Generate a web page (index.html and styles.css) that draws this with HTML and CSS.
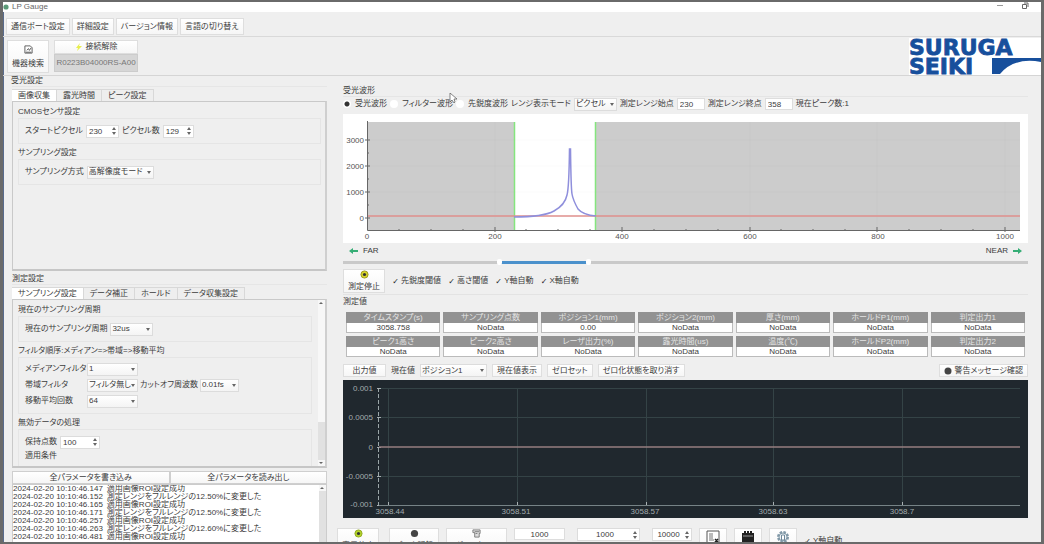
FILE: index.html
```html
<!DOCTYPE html>
<html lang="ja">
<head>
<meta charset="utf-8">
<title>LP Gauge</title>
<link rel="stylesheet" href="styles.css">
</head>
<body>
<div class="window">
  <header class="titlebar">
    <svg class="app-icon" viewBox="0 0 6 6"><circle cx="3" cy="3" r="2.6" fill="#5c9a78"/></svg>
    <span class="app-name">LP Gauge</span>
    <svg class="win-controls" viewBox="0 0 40 10"><path d="M6 3.5h6" stroke="#999"/><path d="M31.5 2.5h4v4h-4zM33 1h4v4" fill="none" stroke="#666"/></svg>
  </header>
  <nav class="menubar">
    <button>通信ポート設定</button><button>詳細設定</button><button>バージョン情報</button><button>言語の切り替え</button>
  </nav>
  <div class="toolbar">
    <button class="tool-button search"><svg class="icon" viewBox="0 0 10 10"><path d="M1 1h6l2 2v6H1z" fill="#fff" stroke="#555"/><path d="M3 6l2-2 1 2 2-3M2 8h6" fill="none" stroke="#555"/></svg>機器検索</button>
    <div class="connection">
      <button><svg class="bolt" viewBox="0 0 8 8"><path d="M5 0L1 5h2L2 8l5-5H4z" fill="#e8ee4c"/></svg>接続解除</button>
      <output>R0223B04000RS-A00</output>
    </div>
    <svg class="logo" viewBox="0 0 132 37" role="img" aria-label="SURUGA SEIKI">
      <rect width="132" height="37" fill="#fff"/>
      <g fill="#174f9c" stroke="#174f9c" stroke-width=".8"><text x="0" y="17">SURUGA</text><text x="0" y="36">SEIKI</text></g>
      <path d="M83 20h49v4Q105 19 91 36H83z" fill="#174f9c"/>
    </svg>
  </div>
  <main class="main">
    <section class="left">
      <h2>受光設定</h2>
      <div class="tabset">
        <div class="tabs"><button class="active">画像収集</button><button>露光時間</button><button>ピーク設定</button></div>
        <div class="pane upper">
          <h3>CMOSセンサ設定</h3>
          <div class="group">
            <div class="row">
              <label for="start">スタートピクセル</label><span class="spin"><input id="start" value="230"><svg viewBox="0 0 6 10"><path d="M1 4l2-3 2 3zM1 6l2 3 2-3z"/></svg></span>
              <label for="count">ピクセル数</label><span class="spin narrow"><input id="count" value="129"><svg viewBox="0 0 6 10"><path d="M1 4l2-3 2 3zM1 6l2 3 2-3z"/></svg></span>
            </div>
          </div>
          <h3>サンプリング設定</h3>
          <div class="group">
            <div class="row"><label for="method">サンプリング方式</label><span class="drop wide"><select id="method"><option>高解像度モード</option></select></span></div>
          </div>
        </div>
      </div>
      <h2 class="second">測定設定</h2>
      <div class="tabset">
        <div class="tabs"><button class="active">サンプリング設定</button><button>データ補正</button><button>ホールド</button><button>データ収集設定</button></div>
        <div class="pane lower">
          <div class="scroll-content">
            <h3>現在のサンプリング周期</h3>
            <div class="group"><div class="row"><label for="cycle">現在のサンプリング周期</label><span class="drop"><select id="cycle"><option>32us</option></select></span></div></div>
            <h3>フィルタ順序:メディアン=&gt;帯域=&gt;移動平均</h3>
            <div class="group filters">
              <div class="row"><label for="median">メディアンフィルタ</label><span class="drop mid"><select id="median"><option>1</option></select></span></div>
              <div class="row"><label for="band">帯域フィルタ</label><span class="drop mid"><select id="band"><option>フィルタ無し</option></select></span><label class="cut" for="cutoff">カットオフ周波数</label><span class="drop small"><select id="cutoff"><option>0.01fs</option></select></span></div>
              <div class="row"><label for="avg">移動平均回数</label><span class="drop mid"><select id="avg"><option>64</option></select></span></div>
            </div>
            <h3>無効データの処理</h3>
            <div class="group open">
              <div class="row"><label for="hold">保持点数</label><span class="spin large"><input id="hold" value="100"><svg viewBox="0 0 6 10"><path d="M1 4l2-3 2 3zM1 6l2 3 2-3z"/></svg></span></div>
              <div class="row">適用条件</div>
            </div>
          </div>
          <div class="scrollbar"><svg viewBox="0 0 6 6"><path d="M1 4l2-2 2 2z"/></svg><i class="thumb"></i><i class="trough"></i><svg viewBox="0 0 6 6"><path d="M1 2l2 2 2-2z"/></svg></div>
        </div>
      </div>
      <div class="param-buttons"><button>全パラメータを書き込み</button><button>全パラメータを読み出し</button></div>
      <div class="log">
        <ol>
          <li><time>2024-02-20 10:10:46.147</time>適用画像ROI設定成功</li>
          <li><time>2024-02-20 10:10:46.152</time>測定レンジをフルレンジの12.50%に変更した</li>
          <li><time>2024-02-20 10:10:46.165</time>適用画像ROI設定成功</li>
          <li><time>2024-02-20 10:10:46.171</time>測定レンジをフルレンジの12.50%に変更した</li>
          <li><time>2024-02-20 10:10:46.257</time>適用画像ROI設定成功</li>
          <li><time>2024-02-20 10:10:46.263</time>測定レンジをフルレンジの12.60%に変更した</li>
          <li><time>2024-02-20 10:10:46.481</time>適用画像ROI設定成功</li>
        </ol>
        <div class="scrollbar"><svg viewBox="0 0 6 6"><path d="M1 4l2-2 2 2z"/></svg><i class="trough"></i></div>
      </div>
    </section>
    <section class="right">
      <h2>受光波形</h2>
      <div class="wave-options">
        <label class="radio"><input type="radio" name="wave" checked>受光波形</label>
        <label class="radio"><input type="radio" name="wave">フィルター波形<svg class="cursor" viewBox="0 0 8 11"><path d="M1 0v9l2-2 2 3 1-1-1-3h3z" fill="#fff" stroke="#555" stroke-width=".7"/></svg></label>
        <label class="radio"><input type="radio" name="wave">先鋭度波形</label>
        <label for="mode">レンジ表示モード</label><span class="drop"><select id="mode"><option>ピクセル</option></select></span>
        <label for="from">測定レンジ始点</label><input class="field" id="from" value="230">
        <label for="to">測定レンジ終点</label><input class="field" id="to" value="358">
        <span>現在ピーク数:1</span>
      </div>
      <svg class="chart" viewBox="0 0 685 129">
        <rect width="685" height="129" fill="#fff"/>
        <rect x="24" y="8" width="147" height="108" fill="#ccc"/><rect x="253" y="8" width="424" height="108" fill="#ccc"/>
        <path d="M152 8v108M407 8v108M534 8v108M662 8v108M24 26h653M24 52h653M24 78h653" stroke="#000" stroke-opacity=".02"/>
        <path d="M171.5 8v108M252.5 8v108" stroke="#85e57e" stroke-width="1.5"/>
        <path d="M24 102h653" stroke="#df8f8c" stroke-opacity=".75" stroke-width="2"/>
        <path d="M171 103Q200 103 211 97T224 81Q226 74 226.500 35h1Q228 74 229 80T235 95Q240 101 253 102" fill="none" stroke="#8f8fdc" stroke-width="1.500"/>
        <path d="M24.500 7v109.500H677M22 26h5M22 52h5M22 78h5M22 104h5M152 113v5M279 113v5M407 113v5M534 113v5M662 113v5M56 115v2M88 115v2M120 115v2M183 115v2M215 115v2M247 115v2M311 115v2M343 115v2M375 115v2M438 115v2M470 115v2M502 115v2M566 115v2M598 115v2M630 115v2M24 39h2M24 65h2M24 91h2" fill="none" stroke="#666"/>
        <g class="axis end"><text x="21" y="29">3000</text><text x="21" y="55">2000</text><text x="21" y="81">1000</text><text x="21" y="107">0</text></g>
        <g class="axis"><text x="24" y="125">0</text><text x="152" y="125">200</text><text x="279" y="125">400</text><text x="407" y="125">600</text><text x="535" y="125">800</text><text x="662" y="125">1000</text></g>
      </svg>
      <div class="directions">
        <span><svg viewBox="0 0 9 6"><path d="M0 3l4-3v2h5v2H4v2z"/></svg>FAR</span>
        <span>NEAR<svg viewBox="0 0 9 6"><path d="M9 3L5 0v2H0v2h5v2z"/></svg></span>
      </div>
      <div class="range"><input type="range" aria-label="始点" max="1000" value="226"><input type="range" aria-label="終点" max="1000" value="357"></div>
      <div class="measure-row">
        <button class="tool-button"><svg class="icon" viewBox="0 0 10 10"><circle cx="5" cy="5" r="4" fill="#d8d52b" stroke="#99951e"/><circle cx="5" cy="5" r="1.800" fill="#333"/></svg>測定停止</button>
        <label class="check"><input type="checkbox" checked>先鋭度閾値</label>
        <label class="check"><input type="checkbox" checked>高さ閾値</label>
        <label class="check"><input type="checkbox" checked>Y軸自動</label>
        <label class="check"><input type="checkbox" checked>X軸自動</label>
      </div>
      <h2 class="values-title">測定値</h2>
      <table class="values">
        <tbody>
          <tr><th>タイムスタンプ(s)</th><th>サンプリング点数</th><th>ポジション1(mm)</th><th>ポジション2(mm)</th><th>厚さ(mm)</th><th>ホールドP1(mm)</th><th>判定出力1</th></tr>
          <tr><td>3058.758</td><td>NoData</td><td>0.00</td><td>NoData</td><td>NoData</td><td>NoData</td><td>NoData</td></tr>
        </tbody>
        <tbody>
          <tr><th>ピーク1高さ</th><th>ピーク2高さ</th><th>レーザ出力(%)</th><th>露光時間(us)</th><th>温度(℃)</th><th>ホールドP2(mm)</th><th>判定出力2</th></tr>
          <tr><td>NoData</td><td>NoData</td><td>NoData</td><td>NoData</td><td>NoData</td><td>NoData</td><td>NoData</td></tr>
        </tbody>
      </table>
      <div class="output-row">
        <button class="output">出力値</button>
        <label for="current">現在値</label><span class="drop wide"><select id="current"><option>ポジション1</option></select></span>
        <button>現在値表示</button><button>ゼロセット</button><button>ゼロ化状態を取り消す</button>
        <button class="warning"><svg viewBox="0 0 8 8"><circle cx="4" cy="4" r="3.500" fill="#444"/></svg>警告メッセージ確認</button>
      </div>
      <svg class="chart dark" viewBox="0 0 685 138">
        <rect width="685" height="138" fill="#20282e"/>
        <path d="M45.500 8v117M174.500 8v117M303.500 8v117M430.500 8v117M559.500 8v117M36 8.500h641M36 37.500h641M36 96.500h641" stroke="#344346"/>
        <path d="M35.500 8v117" stroke="#9ba6a8" stroke-dasharray="4 2"/>
        <path d="M34 8.500h4M34 37.500h4M34 67.500h4M34 96.500h4M34 125.500h4M45.500 122v4M174.500 122v4M303.500 122v4M430.500 122v4M559.500 122v4" stroke="#a8b0b2"/>
        <path d="M36 125.500h641" stroke="#768386"/>
        <path d="M36 67h641" stroke="#967e80" stroke-width="1.500"/>
        <g class="axis end"><text x="30" y="11">0.001</text><text x="30" y="40">0.0005</text><text x="30" y="70">0</text><text x="30" y="99">-0.0005</text><text x="30" y="127">-0.001</text></g>
        <g class="axis"><text x="47" y="134">3058.44</text><text x="173" y="134">3058.51</text><text x="302" y="134">3058.57</text><text x="430" y="134">3058.63</text><text x="559" y="134">3058.7</text></g>
      </svg>
      <div class="bottom-row">
        <button class="tool-button"><svg class="icon" viewBox="0 0 10 10"><circle cx="5" cy="5" r="4" fill="#b5d52b" stroke="#8ca51e"/><circle cx="5" cy="5" r="1.800" fill="#333"/></svg>表示停止</button>
        <button class="tool-button record"><svg class="icon" viewBox="0 0 10 10"><circle cx="5" cy="5" r="4" fill="#444"/></svg>データ記録</button>
        <button class="tool-button clear"><svg class="icon" viewBox="0 0 10 10"><path d="M1 1h8v4H8v4H3V4H1zM3 3h5M4 5h2" fill="#ddd" stroke="#777"/></svg>グラフクリア</button>
        <input class="field points" aria-label="表示点数" value="1000">
        <span class="spin points"><input aria-label="記録点数" value="1000"><svg viewBox="0 0 6 10"><path d="M1 4l2-3 2 3zM1 6l2 3 2-3z"/></svg></span>
        <span class="spin max"><input aria-label="最大点数" value="10000"><svg viewBox="0 0 6 10"><path d="M1 4l2-3 2 3zM1 6l2 3 2-3z"/></svg></span>
        <button class="icon-button" aria-label="グラフ"><svg viewBox="0 0 14 14"><path d="M1 1h12v12H1z" fill="#fff" stroke="#555"/><path d="M3 4h4M3 6h4M3 8h4M3 10h5" stroke="#777"/><path d="M9 9l3 3M12 9l-3 3" stroke="#222" stroke-width="1.500"/></svg></button>
        <button class="icon-button" aria-label="保存"><svg viewBox="0 0 14 14"><path d="M1 3h2V1h2v2h1V1h2v2h1V1h2v2h2v10H1z" fill="#222"/><path d="M2 6h10" stroke="#999"/></svg></button>
        <button class="icon-button" aria-label="設定"><svg viewBox="0 0 14 14"><circle cx="7" cy="7" r="5" fill="#eef3f6" stroke="#8299a8" stroke-width="2" stroke-dasharray="2.500 1.400"/><circle cx="7" cy="7" r="4" fill="none" stroke="#8299a8"/><path d="M5.500 5h3v5h-3z" fill="#fff" stroke="#6d8799"/></svg></button>
        <label class="check"><input type="checkbox" checked>Y軸自動</label>
      </div>
    </section>
  </main>
</div>
</body>
</html>
```
FILE: styles.css
```css
* { box-sizing: border-box; }
body { margin: 0; font: 8px/10px "Liberation Sans", "Noto Sans CJK JP", sans-serif; font-feature-settings: "palt"; color: #3c3c3c; background: #6a6a6a; }
button, input, select { font: inherit; font-feature-settings: inherit; color: inherit; margin: 0; }
h2, h3 { margin: 0; font-size: 8px; line-height: 10px; font-weight: 400; }
button { display: inline-flex; align-items: center; justify-content: center; padding: 0 4px; border: 1px solid #dedede; background: linear-gradient(#fff, #f6f6f6); white-space: nowrap; }
label { white-space: nowrap; }
.window { height: 100vh; overflow: hidden; display: flex; flex-direction: column; border: solid #6a6a6a; border-width: 2px 3px; background: #efefef; box-shadow: inset 1px 0 #596b8c; }

.titlebar { display: flex; align-items: center; flex: none; height: 10px; background: #fff; }
.app-icon { width: 6px; height: 6px; }
.app-name { margin-left: 3px; color: #666; }
.win-controls { width: 40px; height: 10px; margin-left: auto; margin-right: 10px; }
.menubar { display: flex; flex: none; gap: 2px; padding: 6px 3px 1px; border-bottom: 1px solid #d9d9d9; }
.menubar button { height: 17px; }
.toolbar { display: flex; flex: none; align-items: flex-start; gap: 5px; height: 39px; padding: 3px 0 0 4px; border-bottom: 1px solid #d5d5d5; }
.tool-button { flex-direction: column; gap: 3px; height: 24px; min-width: 42px; padding: 1px 3px; }
.tool-button.search { height: 33px; gap: 5px; }
.icon { width: 9px; height: 9px; flex: none; }
.connection { display: grid; width: 84px; grid-template-rows: 14px 18px; }
.bolt { width: 8px; height: 8px; margin-right: 3px; }
.connection output { display: flex; align-items: center; justify-content: center; background: #d6d6d6; color: #777; border: 1px solid #ccc; }
.logo { width: 132px; height: 37px; margin: -2px 0 0 auto; font: bold 22px "DejaVu Sans", sans-serif; overflow: visible; }

.main { flex: 1; min-height: 0; display: grid; grid-template-columns: minmax(300px, 315fr) 685fr; gap: 16px; padding: 0 13px 0 9px; }
.left { display: flex; flex-direction: column; min-height: 0; min-width: 0; }
.left h2 { margin-left: -1px; }
.left .second { margin: 3px 0 0; }
.tabset { display: flex; flex-direction: column; }
.tabs { display: flex; height: 15px; padding-top: 2px; border-top: 1px solid #e6e6e6; }
.tabs button { background: #eee; border-color: #d8d8d8; border-bottom: 0; border-left: 0; padding: 0 6px; }
.tabs .active { background: #fff; }
.pane { border: 1px solid #c9c9c9; border-right: 2px solid #cfcfcf; border-bottom: 2px solid #c6c6c6; padding: 5px 4px 0 5px; }
.upper { min-height: 170px; }
.group { border: 1px solid #e5e5e5; padding: 5px 6px; margin: 1px 0 4px; min-height: 26px; }
.row { display: flex; align-items: center; height: 14px; gap: 3px; }
.spin, .drop { display: inline-flex; align-items: center; height: 13px; border: 1px solid #dcdcdc; background: #fff; position: relative; flex: none; }
.spin { width: 33px; }
.spin.narrow { width: 31px; }
.spin.large { width: 40px; }
.spin input { min-width: 0; width: 100%; flex: 1; height: 11px; border: 0; padding: 0 2px; background: none; }
.spin svg { width: 6px; height: 10px; flex: none; fill: #666; margin-right: 1px; }
.drop { width: 43px; background: linear-gradient(#fff, #f4f4f4); }
.drop.mid { width: 51px; }
.drop.small { width: 39px; }
.drop.wide { width: 67px; }
.drop select { appearance: none; width: 100%; height: 11px; border: 0; padding: 0 1px; background: none; }
.drop::after { content: ""; position: absolute; right: 2px; border: 2px solid transparent; border-top: 3px solid #666; border-bottom: 0; }
.lower { display: flex; height: 169px; padding: 5px 0 0 5px; }
.scroll-content { flex: 1; min-width: 0; overflow: hidden; }
.scroll-content .group { margin-right: 6px; }
.filters .row { height: 16px; gap: 0; }
.scroll-content .filters { padding: 3px 6px 4px; }
.filters label:first-child { width: 62px; }
.filters .cut { margin: 0 2px; }
.scroll-content .open { min-height: 46px; }
.scrollbar { display: flex; flex-direction: column; width: 7px; flex: none; background: #f7f7f7; }
.scrollbar svg { width: 6px; height: 6px; fill: #666; }
.thumb { flex: 3; }
.trough { flex: 1; background: #e1e1e1; }
.lower .scrollbar { margin-top: -5px; }
.param-buttons { display: grid; grid-template-columns: 1fr 1fr; margin-top: 3px; }
.param-buttons button { height: 13px; border-color: #cfcfcf; }
.log { display: flex; flex: 1; min-height: 0; overflow: hidden; background: #fff; border: 1px solid #ccc; }
.log ol { flex: 1; margin: 0; padding: 0; list-style: none; line-height: 8px; white-space: nowrap; }
.log li { display: flex; gap: 4px; }

.right { display: flex; flex-direction: column; min-width: 0; padding-top: 10px; }
.wave-options { display: flex; align-items: center; gap: 3px; height: 15px; border-top: 1px solid #e5e5e5; }
.radio { display: flex; align-items: center; gap: 4px; position: relative; }
.radio input { appearance: none; width: 8px; height: 8px; border-radius: 50%; background: #fff; }
.radio input:checked { background: radial-gradient(circle, #333 2px, #fff 3px); }
.cursor { position: absolute; right: -4px; top: -6px; width: 8px; height: 11px; }
.field { width: 28px; height: 12px; border: 1px solid #ddd; background: #fff; padding: 0 2px; }
.chart { display: block; width: 100%; height: auto; flex: none; font: 8px "Liberation Sans", sans-serif; margin-top: 3px; }
.axis { fill: #555; text-anchor: middle; }
.axis.end { text-anchor: end; }
.dark .axis { fill: #a3abad; }
.directions { display: flex; justify-content: space-between; height: 16px; padding: 3px 6px 0; }
.directions span { display: flex; align-items: center; gap: 5px; height: 10px; }
.directions svg { width: 9px; height: 6px; fill: #35ad75; }
.range { display: grid; height: 6px; align-items: center; background: linear-gradient(90deg, #c9c9c9 23%, #4b91cc 23% 35.500%, #c9c9c9 35.500%) center / 100% 3px no-repeat; }
.range input { grid-area: 1 / 1; appearance: none; width: 100%; height: 6px; background: none; }
.range input::-webkit-slider-thumb { appearance: none; width: 5px; height: 6px; border-radius: 2px; background: #fff; }
.measure-row { display: flex; align-items: center; gap: 7px; padding: 4px 0 1px; border-bottom: 1px solid #e3e3e3; }
.check { display: flex; align-items: center; gap: 2px; }
.check input { appearance: none; width: 7px; height: 7px; display: grid; place-items: center; }
.check input:checked::before { content: "✓"; font: bold 8px/7px "DejaVu Sans", sans-serif; color: #222; }
.values-title { margin-top: 2px; }
.values { width: 100%; table-layout: fixed; border-spacing: 3px 0; margin-top: 5px; text-align: center; }
.values th { height: 11px; padding: 0; line-height: 10px; font-weight: 400; background: #929292; color: #e4e4e4; border: 1px solid #929292; border-bottom: 0; }
.values td { height: 10px; padding: 0; line-height: 9px; background: #fff; border: 1px solid #bbb; border-top: 0; }
.values tbody + tbody::before { content: ""; display: block; height: 3px; }
.output-row { display: flex; align-items: center; gap: 5px; margin-top: 7px; }
.output-row button { height: 13px; }
.output-row .output { width: 43px; }
.output-row .warning { margin-left: auto; gap: 3px; }
.warning svg { width: 8px; height: 8px; }
.bottom-row { display: flex; align-items: flex-start; gap: 7px; margin: 10px 0 0 -6px; }
.bottom-row .record { width: 50px; margin-left: 3px; }
.bottom-row .clear { width: 61px; }
.bottom-row .points { width: 51px; text-align: center; }
.bottom-row span.points { width: 63px; margin: 0 5px; }
.bottom-row .spin input { text-align: center; }
.bottom-row .max { width: 40px; }
.icon-button { width: 28px; height: 24px; align-items: flex-start; padding-top: 1px; }
.icon-button svg { width: 14px; height: 14px; flex: none; }
.bottom-row .check { margin-top: 8px; }
```
